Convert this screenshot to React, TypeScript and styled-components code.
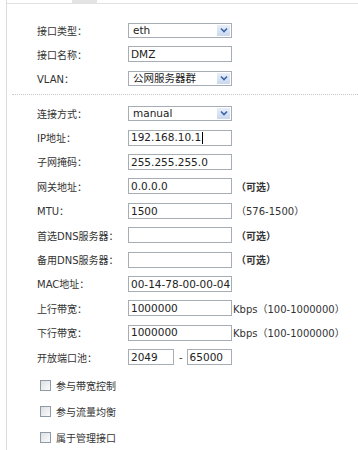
import React from 'react';
import styled, { createGlobalStyle } from 'styled-components';

const Global = createGlobalStyle`
    body {
        margin: 0;
        background: #fff;
        font-family: "DejaVu Sans", "Noto Sans CJK SC", sans-serif;
        color: #333;
    }
`;

const Panel = styled.div`
    margin-left: 6px;
    border-left: 1px solid #dcdcdc;
    min-height: 450px;
`;

const TopBar = styled.div`
    height: 3px;
    border-bottom: 1px solid #e2e2e2;
    position: relative;

    .tab {
        margin-left: 65px;
        width: 25px;
        height: 3px;
        background: #e4e4e4;
    }
`;

const Section = styled.div<{ top: number }>`
    padding: ${p => p.top}px 0 0 30px;
`;

const Row = styled.div<{ h?: number }>`
    display: grid;
    grid-template-columns: 91px auto;
    align-items: center;
    height: ${p => p.h || 24}px;
`;

const Label = styled.div`
    font-size: 10px;
    color: #333;
    white-space: nowrap;
`;

const Field = styled.div`
    display: flex;
    align-items: center;
    font-size: 10px;
    white-space: nowrap;
`;

const Box = styled.div<{ w?: number }>`
    width: ${p => p.w || 104}px;
    height: 16px;
    box-sizing: border-box;
    border: 1px solid #a7adb5;
    background: #fff;
    font-size: 10.5px;
    color: #222;
    padding-left: 2px;
    display: flex;
    align-items: center;
    line-height: 1;
`;

const SelectBox = styled(Box)`
    height: 15px;
    padding-left: 4px;
    justify-content: space-between;
    padding-right: 1px;
`;

const Arrow = styled.span`
    width: 13px;
    height: 11px;
    background: linear-gradient(#e8eff9, #c9d8ee);
    display: flex;
    align-items: center;
    justify-content: center;
`;

const Caret = styled.span`
    display: inline-block;
    width: 1px;
    height: 12px;
    background: #000;
    margin-left: 1px;
`;

const Hint = styled.span<{ bold?: boolean }>`
    margin-left: 4px;
    font-size: 10px;
    font-weight: ${p => (p.bold ? 700 : 400)};
    color: #333;
`;

const Dash = styled.span`
    margin: 0 4px 0 5px;
    font-size: 10px;
`;

const Divider = styled.div`
    margin: 4px 0 0 5px;
    border-top: 1px dotted #c8c8c8;
`;

const Checks = styled.div`
    padding: 3px 0 0 33px;
`;

const CheckRow = styled.div`
    display: flex;
    align-items: center;
    height: 26px;
    font-size: 10px;
    gap: 5px;
`;

const CheckBox = styled.span`
    width: 11px;
    height: 11px;
    box-sizing: border-box;
    border: 1px solid #8f9aa7;
    background: linear-gradient(135deg, #dcdfe3, #fbfbfb);
`;

const Chevron = () => (
    <svg width="8" height="6" viewBox="0 0 8 6">
        <path d="M1 1.5 L4 4.5 L7 1.5" fill="none" stroke="#3d64a6" strokeWidth="1.6" />
    </svg>
);

const Select = ({ value }: { value: string }) => (
    <SelectBox>
        <span>{value}</span>
        <Arrow><Chevron /></Arrow>
    </SelectBox>
);

const section2: [string, string, string?][] = [
    ['子网掩码：', '255.255.255.0'],
    ['网关地址：', '0.0.0.0', 'opt'],
    ['MTU：', '1500', 'mtu'],
    ['首选DNS服务器：', '', 'opt'],
    ['备用DNS服务器：', '', 'opt'],
    ['MAC地址：', '00-14-78-00-00-04'],
    ['上行带宽：', '1000000', 'kbps'],
    ['下行带宽：', '1000000', 'kbps'],
];

function hint(kind?: string) {
    if (kind === 'opt') return <Hint bold>（可选）</Hint>;
    if (kind === 'mtu') return <Hint>（576-1500）</Hint>;
    if (kind === 'kbps') return <Hint style={{ marginLeft: 1 }}>Kbps（100-1000000）</Hint>;
    return null;
}

export default function App() {
    return (
        <Panel>
            <Global />
            <TopBar><div className="tab" /></TopBar>
            <Section top={14}>
                <Row>
                    <Label>接口类型：</Label>
                    <Field><Select value="eth" /></Field>
                </Row>
                <Row>
                    <Label>接口名称：</Label>
                    <Field><Box>DMZ</Box></Field>
                </Row>
                <Row>
                    <Label>VLAN：</Label>
                    <Field><Select value="公网服务器群" /></Field>
                </Row>
            </Section>
            <Divider />
            <Section top={6}>
                <Row h={24.4}>
                    <Label>连接方式：</Label>
                    <Field><Select value="manual" /></Field>
                </Row>
                <Row h={24.4}>
                    <Label>IP地址：</Label>
                    <Field><Box>192.168.10.1<Caret /></Box></Field>
                </Row>
                {section2.map(([label, value, kind]) => (
                    <Row h={24.4} key={label}>
                        <Label>{label}</Label>
                        <Field><Box>{value}</Box>{hint(kind)}</Field>
                    </Row>
                ))}
                <Row h={24.4}>
                    <Label>开放端口池：</Label>
                    <Field>
                        <Box w={46}>2049</Box>
                        <Dash>-</Dash>
                        <Box w={45}>65000</Box>
                    </Field>
                </Row>
            </Section>
            <Checks>
                {['参与带宽控制', '参与流量均衡', '属于管理接口'].map(t => (
                    <CheckRow key={t}>
                        <CheckBox />
                        <span>{t}</span>
                    </CheckRow>
                ))}
            </Checks>
        </Panel>
    );
}
